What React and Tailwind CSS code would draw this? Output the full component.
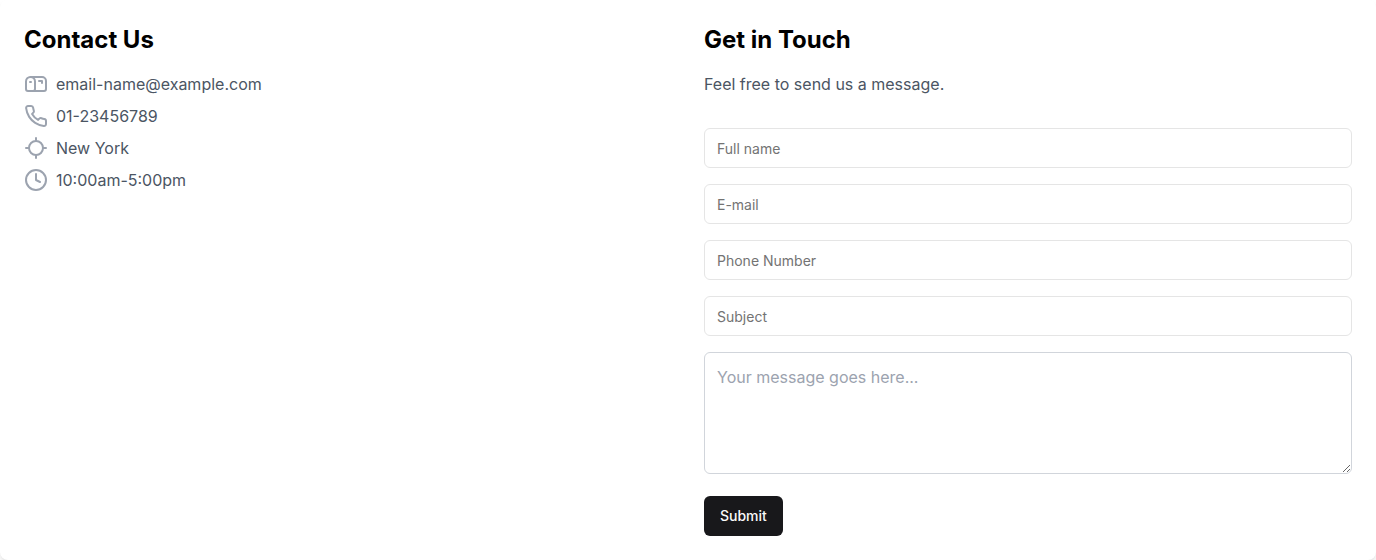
import React from "react";

const fields = [
  { id: "full-name", label: "Full name", type: "text" },
  { id: "email", label: "E-mail", type: "email" },
  { id: "phone", label: "Phone Number", type: "tel" },
  { id: "subject", label: "Subject", type: "text" },
];

function Icon({ children }) {
  return (
    <svg
      className="size-6 shrink-0 text-[#9ca3af]"
      viewBox="0 0 24 24"
      fill="none"
      stroke="currentColor"
      strokeWidth="2"
      strokeLinecap="round"
      strokeLinejoin="round"
      aria-hidden="true"
    >
      {children}
    </svg>
  );
}

function MailboxIcon() {
  return (
    <Icon>
      <path d="M22 17a2 2 0 0 1-2 2H4a2 2 0 0 1-2-2V9.5C2 7 4 5 6.5 5H18c2.2 0 4 1.8 4 4v8Z" />
      <polyline points="15,9 18,9 18,11" />
      <path d="M6.5 5C9 5 11 7 11 9.5V17a2 2 0 0 1-2 2v0" />
      <line x1="6" x2="7" y1="10" y2="10" />
    </Icon>
  );
}

function PhoneIcon() {
  return (
    <Icon>
      <path d="M22 16.92v3a2 2 0 0 1-2.18 2 19.79 19.79 0 0 1-8.63-3.07 19.5 19.5 0 0 1-6-6 19.79 19.79 0 0 1-3.07-8.67A2 2 0 0 1 4.11 2h3a2 2 0 0 1 2 1.72 12.84 12.84 0 0 0 .7 2.81 2 2 0 0 1-.45 2.11L8.09 9.91a16 16 0 0 0 6 6l1.27-1.27a2 2 0 0 1 2.11-.45 12.84 12.84 0 0 0 2.81.7A2 2 0 0 1 22 16.92z" />
    </Icon>
  );
}

function LocateIcon() {
  return (
    <Icon>
      <line x1="2" x2="5" y1="12" y2="12" />
      <line x1="19" x2="22" y1="12" y2="12" />
      <line x1="12" x2="12" y1="2" y2="5" />
      <line x1="12" x2="12" y1="19" y2="22" />
      <circle cx="12" cy="12" r="7" />
    </Icon>
  );
}

function ClockIcon() {
  return (
    <Icon>
      <circle cx="12" cy="12" r="10" />
      <polyline points="12 6 12 12 16 14" />
    </Icon>
  );
}

const details = [
  { icon: MailboxIcon, text: "email-name@example.com" },
  { icon: PhoneIcon, text: "01-23456789" },
  { icon: LocateIcon, text: "New York" },
  { icon: ClockIcon, text: "10:00am-5:00pm" },
];

export default function App() {
  return (
    <main className="grid grid-cols-2 gap-8 rounded-lg bg-white p-6 font-['Inter',sans-serif] text-base text-[#4b5563] shadow-md">
      <section>
        <h2 className="mb-4 text-2xl font-bold text-black">Contact Us</h2>
        <ul className="flex flex-col gap-2">
          {details.map(({ icon: DetailIcon, text }) => (
            <li key={text} className="flex items-center gap-2">
              <DetailIcon />
              <span>{text}</span>
            </li>
          ))}
        </ul>
      </section>
      <section>
        <h2 className="mb-4 text-2xl font-bold text-black">Get in Touch</h2>
        <p className="mb-8">Feel free to send us a message.</p>
        <form className="flex flex-col gap-4" onSubmit={(e) => e.preventDefault()}>
          {fields.map(({ id, label, type }) => (
            <input
              key={id}
              id={id}
              type={type}
              aria-label={label}
              placeholder={label}
              className="block h-10 w-full rounded-md border border-[#e5e5e5] bg-white px-3 py-2 text-sm text-black placeholder:text-[#737373]"
            />
          ))}
          <textarea
            id="message"
            rows={4}
            aria-label="Message"
            placeholder="Your message goes here..."
            className="mb-1.5 block w-full resize rounded-md border border-[#d1d5db] bg-white p-3 text-black placeholder:text-[#9ca3af]"
          />
          <button
            type="submit"
            className="h-10 self-start rounded-md bg-[#18181b] px-4 text-sm font-medium text-[#fafafa]"
          >
            Submit
          </button>
        </form>
      </section>
    </main>
  );
}
